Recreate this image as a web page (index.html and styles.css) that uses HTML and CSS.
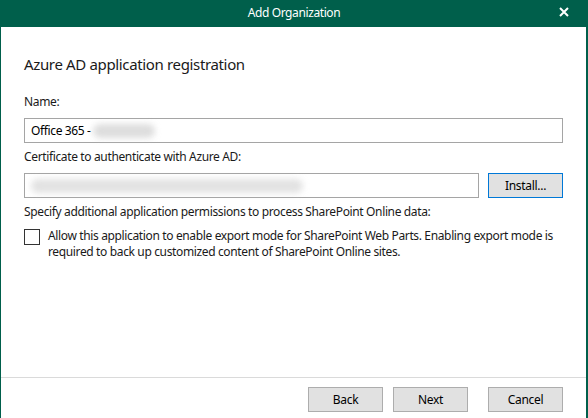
FILE: index.html
```html
<!DOCTYPE html>
<html>
<head>
<meta charset="utf-8">
<link rel="stylesheet" href="styles.css">
</head>
<body>
<div class="window">
  <div class="titlebar">
    <span class="title">Add Organization</span>
    <span class="close">
      <svg width="10" height="10" viewBox="0 0 10 10"><path d="M1 1 L9 9 M9 1 L1 9" stroke="#fff" stroke-width="2" fill="none"/></svg>
    </span>
  </div>
  <div class="content">
    <h1 class="heading">Azure AD application registration</h1>
    <div class="label first">Name:</div>
    <div class="input"><span class="value">Office 365 - </span><span class="blur short"></span></div>
    <div class="label">Certificate to authenticate with Azure AD:</div>
    <div class="row">
      <div class="input grow"><span class="blur long"></span></div>
      <button class="btn default">Install...</button>
    </div>
    <div class="label">Specify additional application permissions to process SharePoint Online data:</div>
    <div class="check-row">
      <span class="checkbox"></span>
      <span class="check-text">Allow this application to enable export mode for SharePoint Web Parts. Enabling export mode is<br>required to back up customized content of SharePoint Online sites.</span>
    </div>
  </div>
  <div class="footer">
    <button class="btn">Back</button>
    <button class="btn next">Next</button>
    <button class="btn cancel">Cancel</button>
  </div>
</div>
</body>
</html>
```

FILE: styles.css
```css
html, body {
  margin: 0;
  padding: 0;
  background: #ffffff;
}
body {
  font-family: "Noto Sans", "Open Sans", sans-serif;
  font-size: 12px;
  letter-spacing: -0.36px;
  color: #000;
}
.window {
  width: 588px;
  height: 418px;
  box-sizing: border-box;
  border-left: 1px solid #005f4b;
  border-right: 2px solid #005f4b;
  display: flex;
  flex-direction: column;
  background: #fff;
}
.titlebar {
  height: 27px;
  flex: 0 0 27px;
  background: #005f4b;
  display: flex;
  align-items: center;
  justify-content: center;
  position: relative;
  margin-left: -1px;
  margin-right: -2px;
}
.title {
  color: #fff;
  font-size: 12px;
  letter-spacing: -0.4px;
  line-height: 16px;
  margin-top: -2px;
}
.close {
  position: absolute;
  right: 19px;
  top: 7px;
  width: 10px;
  height: 10px;
  display: block;
}
.close svg { display: block; }
.content {
  flex: 1;
  padding: 27px 23px 0 23px;
  display: flex;
  flex-direction: column;
  border-bottom: 1px solid #dadada;
}
.heading {
  margin: 0;
  font-weight: normal;
  font-size: 15px;
  letter-spacing: -0.35px;
  line-height: 20px;
  color: #1a1a1a;
  margin-bottom: 20px;
}
.label {
  line-height: 16px;
  margin-top: 6px;
  margin-bottom: 8px;
  color: #1a1a1a;
  white-space: nowrap;
}
.label.first { margin-top: 0; }
.input {
  height: 25px;
  box-sizing: border-box;
  border: 1px solid #a5a5a5;
  display: flex;
  align-items: center;
  padding: 0 6px;
  background: #fff;
}
.value { white-space: pre; line-height: 16px; }
.blur {
  display: block;
  height: 14px;
  background: #cfcfcf;
  border-radius: 7px;
  filter: blur(3px);
}
.blur.short { width: 62px; opacity: 0.7; }
.blur.long { width: 272px; opacity: 0.6; }
.row {
  display: flex;
  gap: 9px;
  align-items: flex-start;
}
.grow { flex: 1; }
.btn {
  font-family: inherit;
  font-size: 12px;
  letter-spacing: -0.3px;
  width: 75px;
  height: 25px;
  box-sizing: border-box;
  background: #e1e1e1;
  border: 1px solid #adadad;
  color: #000;
  padding: 0;
  margin: 0;
}
.btn.default {
  border: 1px solid #0078d7;
}
.check-row {
  display: flex;
  align-items: flex-start;
}
.checkbox {
  width: 16px;
  height: 16px;
  box-sizing: border-box;
  border: 1px solid #333;
  background: #fff;
  margin-top: 1px;
  margin-right: 8px;
  flex: 0 0 16px;
}
.check-text {
  line-height: 16px;
  color: #1a1a1a;
  white-space: nowrap;
}
.footer {
  height: 40px;
  flex: 0 0 40px;
  display: flex;
  justify-content: flex-end;
  align-items: flex-start;
  padding: 9px 23px 0 0;
  box-sizing: border-box;
}
.next { margin-left: 10px; }
.cancel { margin-left: 20px; }
```
